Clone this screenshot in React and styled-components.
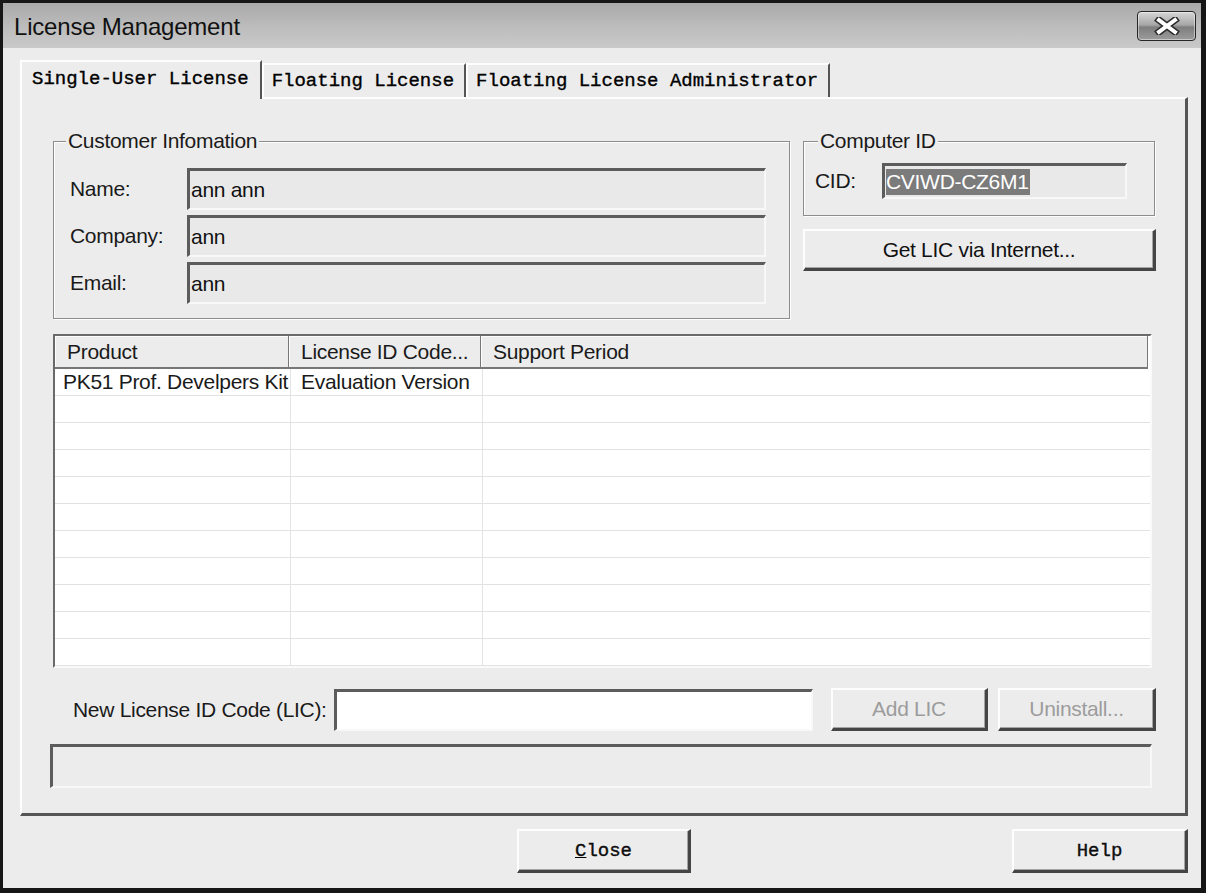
import React from 'react';
import styled, { createGlobalStyle } from 'styled-components';

const sans = `"Liberation Sans", Arial, sans-serif`;
const mono = `"Liberation Mono", "Courier New", monospace`;

const GlobalStyle = createGlobalStyle`
    html, body {
        margin: 0;
        padding: 0;
        background: #141414;
    }
    body {
        width: 1206px;
        height: 893px;
        overflow: hidden;
    }
`

const Window = styled.div`
    width: 1206px;
    height: 893px;
    box-sizing: border-box;
    border-style: solid;
    border-color: #161616;
    border-width: 3px 5px 5px 3px;
    background: #ececec;
    display: flex;
    flex-direction: column;
    font-family: ${sans};
    color: #1a1a1a;
`

const TitleBar = styled.div`
    height: 45px;
    flex: none;
    display: flex;
    align-items: center;
    justify-content: space-between;
    padding: 0 5px 0 11px;
    background: linear-gradient(to bottom, #a9a9a9 0%, #bdbdbd 55%, #c9c9c9 100%);
`

const Title = styled.div`
    font-size: 24px;
    letter-spacing: -0.2px;
    color: #111;
    padding-top: 2px;
`

const CloseX = styled.div`
    width: 59px;
    height: 30px;
    box-sizing: border-box;
    border: 1px solid #262626;
    border-radius: 4px;
    background: linear-gradient(to bottom, #d6d6d6 0%, #a8a8a8 45%, #7e7e7e 55%, #9c9c9c 100%);
    box-shadow: inset 0 0 0 1px rgba(255,255,255,0.45);
    display: flex;
    align-items: center;
    justify-content: center;
`

const Client = styled.div`
    flex: 1;
    display: flex;
    flex-direction: column;
    padding: 12px 13px 15px 17px;
`

const TabStrip = styled.div`
    height: 37px;
    display: flex;
    align-items: flex-end;
`

const Tab = styled.div`
    position: relative;
    z-index: ${p => (p.$active ? 2 : 1)};
    height: ${p => (p.$active ? 39 : 34)}px;
    margin-bottom: ${p => (p.$active ? -2 : 0)}px;
    padding: ${p => (p.$active ? '0 11px 4px 10px' : '0 10px 0 8px')};
    box-sizing: border-box;
    display: flex;
    align-items: center;
    background: #ececec;
    border-top: 2px solid #fdfdfd;
    border-left: 2px solid #fdfdfd;
    border-right: 2px solid #555;
    font-family: ${mono};
    font-size: 19px;
    color: #000;
    -webkit-text-stroke: 0.35px #000;
    white-space: pre;
`

const Panel = styled.div`
    display: flex;
    flex-direction: column;
    border-style: solid;
    border-width: 2px 3px 3px 2px;
    border-color: #fdfdfd #555 #555 #fdfdfd;
    padding: 42px 29px 25px 31px;
`

const TopRow = styled.div`
    display: flex;
    gap: 13px;
    align-items: flex-start;
`

const GroupBox = styled.div`
    width: ${p => p.$w}px;
    box-sizing: border-box;
    border: 1px solid #8c8c8c;
    box-shadow: 1px 1px 0 #fdfdfd, inset 1px 1px 0 #fdfdfd;
    padding: 0 0 ${p => p.$pb}px 0;
`

const Legend = styled.div`
    width: fit-content;
    margin: -13px 0 0 ${p => p.$x}px;
    padding: 0 2px;
    height: 24px;
    line-height: 24px;
    background: #ececec;
    font-size: 21px;
    letter-spacing: -0.3px;
`

const FieldGrid = styled.div`
    display: grid;
    grid-template-columns: ${p => p.$cols};
    row-gap: 5px;
    align-items: center;
    margin-top: ${p => p.$mt}px;
    padding-left: ${p => p.$pl}px;
`

const Label = styled.div`
    font-size: 21px;
    letter-spacing: -0.3px;
`

const Field = styled.div`
    height: ${p => p.$h}px;
    box-sizing: border-box;
    border-style: solid;
    border-width: 3px 2px 2px 3px;
    border-color: #5c5c5c #f8f8f8 #f8f8f8 #5c5c5c;
    background: ${p => (p.$white ? '#fff' : '#e9e9e9')};
    display: flex;
    align-items: center;
    padding-left: 1px;
    font-size: 21px;
    letter-spacing: -0.3px;
    color: #111;
    white-space: nowrap;
    overflow: hidden;
`

const Selected = styled.span`
    background: #7b7b7b;
    color: #fff;
    padding: 1px 1px 1px 0;
`

const RightCol = styled.div`
    display: flex;
    flex-direction: column;
    gap: 13px;
`

const Button = styled.button`
    width: ${p => p.$w}px;
    height: ${p => p.$h}px;
    box-sizing: border-box;
    padding: 0;
    border-style: solid;
    border-width: 2px 3px 3px 2px;
    border-color: #fdfdfd #454545 #454545 #fdfdfd;
    box-shadow: inset -1px -1px 0 #a4a4a4;
    background: #ececec;
    font-family: ${p => (p.$mono ? mono : sans)};
    font-size: ${p => (p.$mono ? 19 : 21)}px;
    letter-spacing: ${p => (p.$mono ? 0 : -0.3)}px;
    -webkit-text-stroke: ${p => (p.$mono ? '0.35px #000' : '0')};
    color: ${p => (p.$off ? '#9c9c9c' : '#111')};
    cursor: default;
`

const Table = styled.div`
    width: 1099px;
    height: 334px;
    box-sizing: border-box;
    margin-top: 15px;
    border-style: solid;
    border-width: 2px;
    border-color: #6a6a6a #fafafa #fafafa #6a6a6a;
    background: #fff;
    display: flex;
    flex-direction: column;
    overflow: hidden;
`

const HeaderRow = styled.div`
    display: grid;
    grid-template-columns: 234px 192px 667px;
    height: 33px;
    flex: none;
`

const HeaderCell = styled.div`
    background: #ececec;
    box-sizing: border-box;
    border-right: 1px solid #777;
    border-bottom: 2px solid #777;
    box-shadow: inset 1px 1px 0 #fdfdfd;
    display: flex;
    align-items: center;
    padding-left: 12px;
    font-size: 21px;
    letter-spacing: -0.3px;
`

const BodyRow = styled.div`
    display: grid;
    grid-template-columns: 236px 192px 1fr;
    height: 27px;
    flex: none;
`

const Cell = styled.div`
    box-sizing: border-box;
    border-bottom: 1px solid #e2e2e2;
    border-right: ${p => (p.$last ? 'none' : '1px solid #e4e4e4')};
    display: flex;
    align-items: center;
    padding-left: ${p => p.$pl}px;
    font-size: 21px;
    letter-spacing: -0.3px;
    white-space: nowrap;
    overflow: hidden;
`

const LicRow = styled.div`
    margin-top: 20px;
    display: flex;
    align-items: center;
`

const LicLabel = styled.div`
    flex: 1;
    padding-left: 20px;
    font-size: 21px;
    letter-spacing: -0.3px;
    white-space: nowrap;
`

const LicInput = styled(Field)`
    width: 479px;
    margin-right: 18px;
`

const Status = styled.div`
    margin: 13px 4px 0 -3px;
    height: 44px;
    box-sizing: border-box;
    border-style: solid;
    border-width: 3px 2px 2px 3px;
    border-color: #5c5c5c #f8f8f8 #f8f8f8 #5c5c5c;
`

const BottomRow = styled.div`
    margin-top: 13px;
    display: grid;
    grid-template-columns: 1fr auto 1fr;
    align-items: center;
    & > :last-child {
        justify-self: end;
    }
`

const rows = [
    ['PK51 Prof. Develpers Kit', 'Evaluation Version', ''],
    ...Array.from({ length: 10 }, () => ['', '', '']),
];

function App() {
    return (
        <>
            <GlobalStyle />
            <Window>
                <TitleBar>
                    <Title>License Management</Title>
                    <CloseX>
                        <svg width="28" height="18" viewBox="0 0 28 18">
                            <path d="M6 3 L22 15 M22 3 L6 15" stroke="#2a2a2a" strokeWidth="7" strokeLinecap="square" />
                            <path d="M6 3 L22 15 M22 3 L6 15" stroke="#fff" strokeWidth="4" strokeLinecap="square" />
                        </svg>
                    </CloseX>
                </TitleBar>
                <Client>
                    <TabStrip>
                        <Tab $active>Single-User License</Tab>
                        <Tab>Floating License</Tab>
                        <Tab>Floating License Administrator</Tab>
                    </TabStrip>
                    <Panel>
                        <TopRow>
                            <GroupBox $w={737} $pb={14}>
                                <Legend $x={12}>Customer Infomation</Legend>
                                <FieldGrid $cols="117px 579px" $mt={15} $pl={16}>
                                    <Label>Name:</Label>
                                    <Field $h={42}>ann ann</Field>
                                    <Label>Company:</Label>
                                    <Field $h={42}>ann</Field>
                                    <Label>Email:</Label>
                                    <Field $h={42}>ann</Field>
                                </FieldGrid>
                            </GroupBox>
                            <RightCol>
                                <GroupBox $w={352} $pb={16}>
                                    <Legend $x={14}>Computer ID</Legend>
                                    <FieldGrid $cols="67px 245px" $mt={10} $pl={11}>
                                        <Label>CID:</Label>
                                        <Field $h={36}><Selected>CVIWD-CZ6M1</Selected></Field>
                                    </FieldGrid>
                                </GroupBox>
                                <Button $w={353} $h={42}>Get LIC via Internet...</Button>
                            </RightCol>
                        </TopRow>
                        <Table>
                            <HeaderRow>
                                <HeaderCell>Product</HeaderCell>
                                <HeaderCell>License ID Code...</HeaderCell>
                                <HeaderCell>Support Period</HeaderCell>
                            </HeaderRow>
                            {rows.map((r, i) => (
                                <BodyRow key={i}>
                                    <Cell $pl={8}>{r[0]}</Cell>
                                    <Cell $pl={10}>{r[1]}</Cell>
                                    <Cell $pl={10} $last>{r[2]}</Cell>
                                </BodyRow>
                            ))}
                        </Table>
                        <LicRow>
                            <LicLabel>New License ID Code (LIC):</LicLabel>
                            <LicInput $h={42} $white />
                            <Button $w={157} $h={43} $off style={{ marginRight: 10 }}>Add LIC</Button>
                            <Button $w={158} $h={43} $off>Uninstall...</Button>
                        </LicRow>
                        <Status />
                    </Panel>
                    <BottomRow>
                        <span />
                        <Button $w={174} $h={44} $mono><u>C</u>lose</Button>
                        <Button $w={176} $h={44} $mono>Help</Button>
                    </BottomRow>
                </Client>
            </Window>
        </>
    );
}

export default App;
